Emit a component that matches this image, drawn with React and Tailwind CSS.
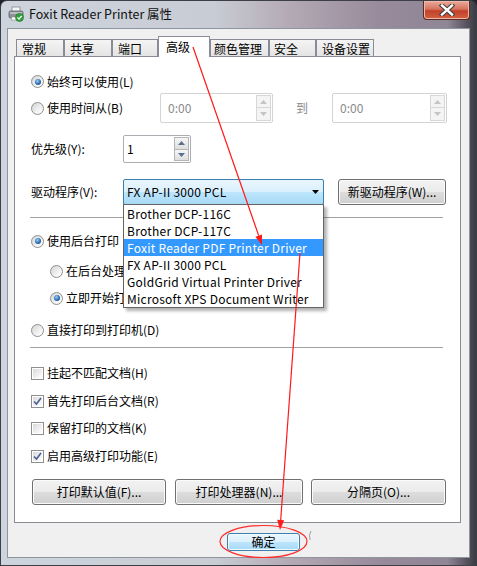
import React from 'react';

const FONT = "font-['Noto_Sans_CJK_SC','Noto_Sans',sans-serif]";

function Radio({ checked }) {
    return (
        <span className="w-[13px] h-[13px] shrink-0 rounded-full border border-[#8e8f8f] bg-[linear-gradient(135deg,#d4d4d4,#f6f6f6_70%,#ffffff)] flex items-center justify-center">
            {checked && (
                <span className="w-[6px] h-[6px] rounded-full bg-[radial-gradient(circle_at_40%_35%,#9fd0f5,#2a6db5_55%,#0f3f7a)]" />
            )}
        </span>
    );
}

function Check({ checked }) {
    return (
        <span className="w-[13px] h-[13px] shrink-0 border border-[#8e8f8f] bg-white p-px flex">
            <span className="flex-1 bg-[linear-gradient(135deg,#d9d9d9,#f4f4f4_70%,#ffffff)] flex items-center justify-center">
                {checked && (
                    <svg width="9" height="9" viewBox="0 0 9 9">
                        <path d="M1 4.5 L3.5 7 L8 1" fill="none" stroke="#4a5f97" strokeWidth="1.6" />
                    </svg>
                )}
            </span>
        </span>
    );
}

function Arrow({ up, color }) {
    return (
        <svg width="7" height="4" viewBox="0 0 7 4">
            <path d={up ? 'M0 4 L3.5 0 L7 4 Z' : 'M0 0 L7 0 L3.5 4 Z'} fill={color} />
        </svg>
    );
}

function Spin({ value, disabled, className }) {
    const border = disabled ? 'border-[#d3d3d3]' : 'border-[#abadb3]';
    const arrow = disabled ? '#c4c4c4' : '#5b6f8e';
    const btn = disabled ? 'border-[#d7d7d7] bg-[#f4f4f4]' : 'border-[#b5b5b5] bg-[linear-gradient(#f6f6f6,#dedede)]';
    return (
        <div className={`relative flex items-center bg-white border rounded-[2px] ${border} ${className}`}>
            <span className={disabled ? 'pl-[7px] text-[#8a8a8a]' : 'pl-[3px] text-black'}>{value}</span>
            <div className="ml-auto mr-[1px] self-stretch flex flex-col justify-center py-[1px]">
                <div className={`w-[15px] flex-1 max-h-[13px] border ${btn} flex items-center justify-center`}>
                    <Arrow up color={arrow} />
                </div>
                <div className={`w-[15px] flex-1 max-h-[13px] border border-t-0 ${btn} flex items-center justify-center`}>
                    <Arrow color={arrow} />
                </div>
            </div>
        </div>
    );
}

function Btn({ children, className }) {
    return (
        <div className={`h-[26px] flex items-center justify-center rounded-[3px] border border-[#707070] bg-[linear-gradient(#f2f2f2,#ebebeb_50%,#dddddd_50%,#cfcfcf)] shadow-[inset_0_0_0_1px_#fbfbfb] ${className}`}>
            {children}
        </div>
    );
}

function Option({ children, checked, sub, kind = 'radio', className = '', clip }) {
    return (
        <div className={`h-[20px] flex items-center gap-[3px] ${sub ? 'pl-[35px]' : 'pl-[16px]'} ${className}`}>
            {kind === 'radio' ? <Radio checked={checked} /> : <Check checked={checked} />}
            {/* the list of drivers covers the rest of these labels */}
            <span className={`whitespace-nowrap ${clip ? 'w-[57px] overflow-hidden' : ''}`}>{children}</span>
        </div>
    );
}

const tabs = [
    { label: '常规', w: 'w-[48px]', pl: 'pl-[5px]' },
    { label: '共享', w: 'w-[48px]', pl: 'pl-[5px]' },
    { label: '端口', w: 'w-[46px]', pl: 'pl-[5px]' },
    { label: '高级', w: 'w-[52px]', pl: 'pl-[7px]', active: true },
    { label: '颜色管理', w: 'w-[59px]', pl: 'pl-[3px]' },
    { label: '安全', w: 'w-[47px]', pl: 'pl-[4px]' },
    { label: '设备设置', w: 'w-[58px]', pl: 'pl-[5px]' },
];

const drivers = [
    'Brother DCP-116C',
    'Brother DCP-117C',
    'Foxit Reader PDF Printer Driver',
    'FX AP-II 3000 PCL',
    'GoldGrid Virtual Printer Driver',
    'Microsoft XPS Document Writer',
];

export default function App() {
    return (
        <div className={`relative w-[477px] h-[566px] overflow-hidden bg-[#22222a] text-[12px] text-black ${FONT}`}>
            <div className="flex flex-col w-full h-full rounded-t-[7px] border border-[#3c3f46] bg-[linear-gradient(90deg,#cdd4dd_0%,#c8ccd4_45%,#b2a7b3_62%,#978a9b_80%,#8f8696_94%,#3a3a42_100%)]">
                {/* Title bar */}
                <div className="h-[27px] flex items-start">
                    <div className="flex items-center h-[26px] pl-[7px]">
                        <svg width="16" height="16" viewBox="0 0 16 16">
                            <rect x="4" y="1" width="8" height="5" fill="#f4f4f4" stroke="#8a8a8a" strokeWidth="0.8" />
                            <rect x="1" y="5" width="14" height="7" rx="1.5" fill="#8d9298" stroke="#5b6066" strokeWidth="0.8" />
                            <rect x="2" y="6" width="12" height="2" fill="#b9bdc2" />
                            <rect x="3.5" y="11" width="8" height="3" fill="#ffffff" stroke="#8a8a8a" strokeWidth="0.6" />
                            <circle cx="11.5" cy="11.5" r="4" fill="#2fa33a" stroke="#1c6f24" strokeWidth="0.6" />
                            <path d="M9.4 11.6 L11 13.1 L13.7 9.9" fill="none" stroke="#ffffff" strokeWidth="1.4" />
                        </svg>
                        <span className="ml-[5px] text-[12.5px] text-[#111]">Foxit Reader Printer 属性</span>
                    </div>
                    <div className="ml-auto mr-[6px] w-[47px] h-[19px] rounded-b-[4px] border border-t-0 border-[#5a2b25] bg-[linear-gradient(#e9ab9c,#d7735d_45%,#c1402a_55%,#d2623f)] shadow-[inset_0_0_0_1px_#f0b8a8] flex items-center justify-center">
                        <svg width="16" height="12" viewBox="0 0 16 12">
                            <path d="M3 1.5 L13 10.5 M13 1.5 L3 10.5" stroke="#3b3b3b" strokeWidth="4.4" strokeLinecap="square" />
                            <path d="M3 1.5 L13 10.5 M13 1.5 L3 10.5" stroke="#ffffff" strokeWidth="2.4" strokeLinecap="square" />
                        </svg>
                    </div>
                </div>

                {/* Client area */}
                <div className="flex-1 mx-[6px] mb-[7px] bg-[#f0f0f0] border border-[#8f959d] flex flex-col">
                    {/* Tabs */}
                    <div className="h-[27px] pl-[8px] flex items-end">
                        {tabs.map(t => (
                            <div
                                key={t.label}
                                className={`${t.w} ${t.pl} border border-b-0 border-[#898c95] whitespace-nowrap ${
                                    t.active
                                        ? 'h-[21px] -mb-px relative z-10 bg-white pt-[1px]'
                                        : 'h-[17px] bg-[linear-gradient(#f4f4f4,#e4e4e4)] leading-[17px]'
                                }`}
                            >
                                {t.label}
                            </div>
                        ))}
                    </div>

                    {/* Panel */}
                    <div className="ml-[6px] w-[447px] h-[467px] bg-white border border-[#898c95] flex flex-col">
                        <div className="mt-[13px] h-[23px] flex items-center">
                            <Option checked>始终可以使用(L)</Option>
                        </div>
                        <div className="h-[30px] flex items-center">
                            <div className="w-[145px]">
                                <Option>使用时间从(B)</Option>
                            </div>
                            <Spin value="0:00" disabled className="w-[113px] h-[30px]" />
                            <span className="ml-[23px] text-[#8a8a8a]">到</span>
                            <Spin value="0:00" disabled className="ml-[24px] w-[115px] h-[30px]" />
                        </div>
                        <div className="mt-[12px] h-[28px] flex items-center pl-[16px]">
                            <span className="w-[92px]">优先级(Y):</span>
                            <Spin value="1" className="w-[68px] h-[28px]" />
                        </div>
                        <div className="mt-[16px] h-[26px] flex items-center pl-[16px]">
                            <span className="w-[92px]">驱动程序(V):</span>
                            <div className="relative z-20 w-[201px] h-[26px] tracking-[0.25px]">
                                <div className="h-[26px] flex items-center pl-[3px] pr-[4px] rounded-[2px] border border-[#3c7fb1] bg-[linear-gradient(#eaf6fd,#d9f0fc_50%,#bee6fd_50%,#a7d9f5)]">
                                    <span>FX AP-II 3000 PCL</span>
                                    <svg className="ml-auto" width="7" height="4" viewBox="0 0 7 4">
                                        <path d="M0 0 L7 0 L3.5 4 Z" fill="#000" />
                                    </svg>
                                </div>
                                <div className="absolute left-0 top-[25px] w-[201px] bg-white border border-[#646464] shadow-[3px_3px_3px_rgba(0,0,0,0.3)] flex flex-col">
                                    {drivers.map(d => (
                                        <div
                                            key={d}
                                            className={`h-[17px] leading-[17px] pl-[3px] whitespace-nowrap ${
                                                d.startsWith('Foxit') ? 'bg-[#3399ff] text-white' : ''
                                            }`}
                                        >
                                            {d}
                                        </div>
                                    ))}
                                </div>
                            </div>
                            <Btn className="ml-[14px] w-[108px]">新驱动程序(W)...</Btn>
                        </div>
                        <div className="mt-[12px] ml-[15px] w-[413px] h-px bg-[#a0a0a0]" />
                        <Option checked className="mt-[13px]">使用后台打印</Option>
                        <Option sub clip className="mt-[10px]">在后台处理完最后一页时开始打印(T)</Option>
                        <Option sub clip checked className="mt-[7px]">立即开始打印(I)</Option>
                        <Option className="mt-[12px]">直接打印到打印机(D)</Option>
                        <div className="mt-[7px] ml-[15px] w-[413px] h-px bg-[#a0a0a0]" />
                        <Option kind="check" className="mt-[15px]">挂起不匹配文档(H)</Option>
                        <Option kind="check" checked className="mt-[8px]">首先打印后台文档(R)</Option>
                        <Option kind="check" className="mt-[7px]">保留打印的文档(K)</Option>
                        <Option kind="check" checked className="mt-[8px]">启用高级打印功能(E)</Option>
                        <div className="mt-[13px] pl-[17px] flex">
                            <Btn className="w-[134px]">打印默认值(F)...</Btn>
                            <Btn className="ml-[9px] w-[128px]">打印处理器(N)...</Btn>
                            <Btn className="ml-[8px] w-[135px]">分隔页(O)...</Btn>
                        </div>
                    </div>

                    {/* OK button */}
                    <div className="mt-[10px] ml-[219px] w-[73px] h-[18px] flex items-center justify-center rounded-[3px] border border-[#3c7fb1] bg-[linear-gradient(#eaf6fd,#d9f0fc_50%,#bee6fd_50%,#a7d9f5)] shadow-[inset_0_0_0_1px_#f4fbff]">
                        确定
                    </div>
                </div>
            </div>

            {/* Red annotations */}
            <svg className="absolute inset-0 z-30 pointer-events-none" width="477" height="566" viewBox="0 0 477 566">
                <line x1="193" y1="47" x2="258.7" y2="235.6" stroke="#ff1a1a" strokeWidth="1.2" />
                <polygon points="255.4,236.7 262,245 262,234.4" fill="#ff1a1a" />
                <line x1="300" y1="253" x2="280.7" y2="520" stroke="#ff1a1a" strokeWidth="1.2" />
                <polygon points="277.2,519.8 280,530 284.2,520.3" fill="#ff1a1a" />
                <ellipse cx="263.5" cy="541.5" rx="43.5" ry="16" fill="none" stroke="#ff2a2a" strokeWidth="1.2" />
                <path d="M311 531 Q308.5 535 310 540" fill="none" stroke="#a0a0a0" strokeWidth="1" />
            </svg>
        </div>
    );
}
